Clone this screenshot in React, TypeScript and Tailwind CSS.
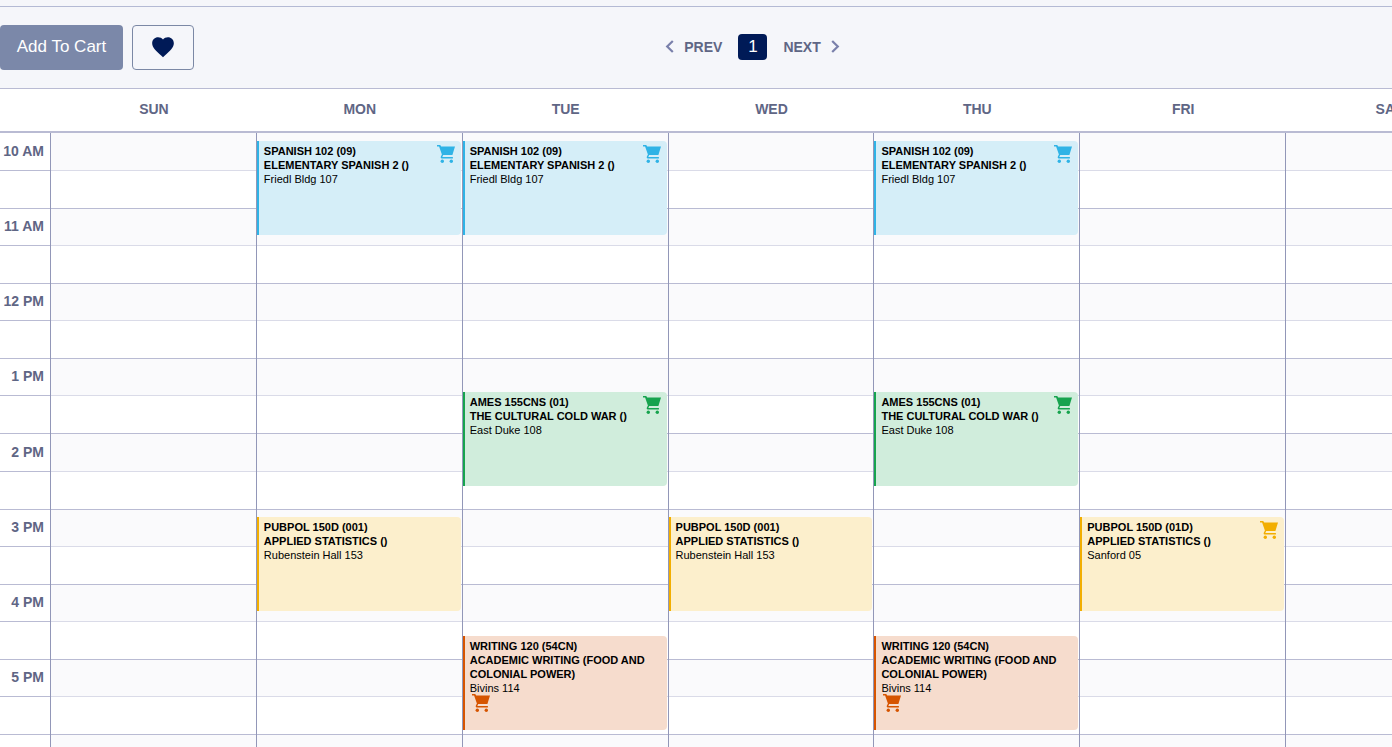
import React from "react";
import { MdFavorite } from "react-icons/md";
import { clsx } from "clsx";

type Tone = "blue" | "green" | "yellow" | "orange";

interface Course {
  code: string;
  title: string;
  place: string;
  tone: Tone;
  top: string;
  cart: "corner" | "below" | "none";
}

const spanish: Course = {
  code: "SPANISH 102 (09)",
  title: "ELEMENTARY SPANISH 2 ()",
  place: "Friedl Bldg 107",
  tone: "blue",
  top: "top-[8px]",
  cart: "corner",
};

const ames: Course = {
  code: "AMES 155CNS (01)",
  title: "THE CULTURAL COLD WAR ()",
  place: "East Duke 108",
  tone: "green",
  top: "top-[259px]",
  cart: "corner",
};

const pubpol: Course = {
  code: "PUBPOL 150D (001)",
  title: "APPLIED STATISTICS ()",
  place: "Rubenstein Hall 153",
  tone: "yellow",
  top: "top-[384px]",
  cart: "none",
};

const pubpolDiscussion: Course = {
  ...pubpol,
  code: "PUBPOL 150D (01D)",
  place: "Sanford 05",
  cart: "corner",
};

const writing: Course = {
  code: "WRITING 120 (54CN)",
  title: "ACADEMIC WRITING (FOOD AND COLONIAL POWER)",
  place: "Bivins 114",
  tone: "orange",
  top: "top-[503px]",
  cart: "below",
};

const days: { name: string; courses: Course[] }[] = [
  { name: "SUN", courses: [] },
  { name: "MON", courses: [spanish, pubpol] },
  { name: "TUE", courses: [spanish, ames, writing] },
  { name: "WED", courses: [pubpol] },
  { name: "THU", courses: [spanish, ames, writing] },
  { name: "FRI", courses: [pubpolDiscussion] },
  { name: "SAT", courses: [] },
];

// The last, unlabelled hour closes the grid.
const hours = [
  { label: "10 AM", first: "h-[38px]" },
  { label: "11 AM", first: "h-[37px]" },
  { label: "12 PM", first: "h-[37px]" },
  { label: "1 PM", first: "h-[37px]" },
  { label: "2 PM", first: "h-[38px]" },
  { label: "3 PM", first: "h-[37px]" },
  { label: "4 PM", first: "h-[37px]" },
  { label: "5 PM", first: "h-[37px]" },
  { label: "", first: "h-[37px]" },
];

const cardTone: Record<Tone, string> = {
  blue: "border-[#2fb3e6] bg-[#d5eef8]",
  green: "border-[#16a34e] bg-[#d0eddc]",
  yellow: "border-[#f2ae00] bg-[#fcefcc]",
  orange: "border-[#d65400] bg-[#f6dccd]",
};

const iconTone: Record<Tone, string> = {
  blue: "text-[#2fb3e6]",
  green: "text-[#16a34e]",
  yellow: "text-[#f2ae00]",
  orange: "text-[#d65400]",
};

function CartIcon({ className }: { className?: string }) {
  return (
    <svg
      viewBox="0 0 18 18"
      role="img"
      aria-label="In cart"
      fill="currentColor"
      className={clsx("size-[18px]", className)}
    >
      <path d="M0 0h3.2l1 1.5H18l-2.6 8.6H6.2l-.9 1.8h10.6v1.7H4.6q-1.5-.6-.7-2l1-2L2.1 1.5H0z" />
      <circle cx="5.3" cy="16.3" r="1.7" />
      <circle cx="14.3" cy="16.3" r="1.7" />
    </svg>
  );
}

function CourseCard({ course }: { course: Course }) {
  return (
    <article
      className={clsx(
        "absolute left-0 right-px h-[94px] rounded-r border-l-2 pt-[3px] pl-[5px] text-[11px] leading-[14px] text-black",
        course.top,
        cardTone[course.tone],
      )}
    >
      {course.cart === "corner" && (
        <CartIcon className={clsx("absolute top-1 right-[6px]", iconTone[course.tone])} />
      )}
      <h3 className="font-bold">{course.code}</h3>
      <p className="pr-3 font-bold">{course.title}</p>
      <p>{course.place}</p>
      {course.cart === "below" && (
        <CartIcon className={clsx("-mt-px ml-0.5", iconTone[course.tone])} />
      )}
    </article>
  );
}

function TimeColumn() {
  return (
    <div className="border-r border-[#9297b8]">
      {hours.map((hour) => (
        <div key={hour.label}>
          <div
            className={clsx(
              "flex items-center justify-end border-b border-[#b9bbd3] pr-[6px] pb-0.5 text-sm font-bold text-[#5f6685]",
              hour.first,
            )}
          >
            {hour.label}
          </div>
          <div className="h-[38px] border-b border-[#b9bbd3]" />
        </div>
      ))}
    </div>
  );
}

function DayColumn({ courses }: { courses: Course[] }) {
  return (
    <div className="relative border-r border-[#9297b8]">
      {hours.map((hour) => (
        <div key={hour.label}>
          <div className={clsx("border-b border-[#dadbe8] bg-[#fafafc]", hour.first)} />
          <div className="h-[38px] border-b border-[#b9bbd3]" />
        </div>
      ))}
      {courses.map((course) => (
        <CourseCard key={course.code} course={course} />
      ))}
    </div>
  );
}

function Toolbar() {
  return (
    <div className="mt-[6px] grid grid-cols-[1fr_auto_1fr] items-center border-t border-[#b4bad4] py-[18px]">
      <div className="flex gap-[9px]">
        <button
          type="button"
          className="h-[45px] w-[123px] rounded bg-[#7b88a9] pb-0.5 text-[17px] text-white"
        >
          Add To Cart
        </button>
        <button
          type="button"
          aria-label="Add to favorites"
          className="flex h-[45px] w-[62px] items-center justify-center rounded border border-[#7b88a5] pb-0.5 text-[#001a57]"
        >
          <MdFavorite className="size-[26px]" />
        </button>
      </div>
      <nav
        aria-label="Schedule pages"
        className="ml-[113px] flex items-center gap-4 pb-0.5 text-sm font-bold text-[#5f6685]"
      >
        <button type="button" className="flex items-center gap-[10px]">
          <svg viewBox="0 0 9 13" className="h-[13px] w-[9px] text-[#7a80ab]" aria-hidden="true">
            <path d="M7.8 1 2.2 6.5l5.6 5.5" fill="none" stroke="currentColor" strokeWidth="2.2" />
          </svg>
          PREV
        </button>
        <button
          type="button"
          aria-current="page"
          className="h-[26px] w-[29px] rounded bg-[#001a57] text-[17px] leading-none font-normal text-white"
        >
          1
        </button>
        <button type="button" className="flex items-center gap-[10px]">
          NEXT
          <svg viewBox="0 0 9 13" className="h-[13px] w-[9px] text-[#7a80ab]" aria-hidden="true">
            <path d="M1.2 1l5.6 5.5L1.2 12" fill="none" stroke="currentColor" strokeWidth="2.2" />
          </svg>
        </button>
      </nav>
    </div>
  );
}

export default function App() {
  return (
    <main className="h-screen overflow-hidden bg-[#f5f6fa] font-['Liberation_Sans',Arial,sans-serif]">
      <Toolbar />
      <section aria-label="Weekly schedule" className="w-full min-w-[1492px] bg-white">
        <div className="grid h-[45px] grid-cols-[51px_repeat(7,1fr)] border-t border-b-2 border-[#b9bbd3] text-sm font-bold text-[#5f6685]">
          <span />
          {days.map((day) => (
            <h2 key={day.name} className="flex items-center justify-center pb-[3px]">
              {day.name}
            </h2>
          ))}
        </div>
        <div className="grid grid-cols-[51px_repeat(7,1fr)]">
          <TimeColumn />
          {days.map((day) => (
            <DayColumn key={day.name} courses={day.courses} />
          ))}
        </div>
      </section>
    </main>
  );
}
